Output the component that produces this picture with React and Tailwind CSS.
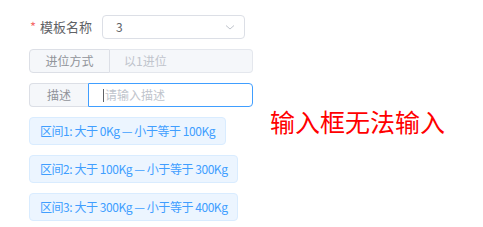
import React from "react";

export default function App() {
  const tags = [
    "区间1: 大于 0Kg — 小于等于 100Kg",
    "区间2: 大于 100Kg — 小于等于 300Kg",
    "区间3: 大于 300Kg — 小于等于 400Kg",
  ];
  return (
    <div className="w-[483px] h-[227px] bg-white flex pl-[29px] pt-[15px] font-['Noto_Sans_CJK_SC','Liberation_Sans',sans-serif]">
      <div className="w-[224px] flex flex-col">
        <div className="flex items-center h-6">
          <div className="w-[73px] flex items-center text-[13px] text-[#606266] pl-[1px]">
            <span className="text-[#f56c6c] mr-[4px] text-[13px]">*</span>
            <span>模板名称</span>
          </div>
          <div className="w-[143px] h-6 border border-[#dcdfe6] rounded-[4px] flex items-center justify-between pl-[13px] pr-[8px] text-[12px] text-[#606266]">
            <span>3</span>
            <svg width="12" height="12" viewBox="0 0 12 12" fill="none">
              <path d="M2 4.5 L6 8 L10 4.5" stroke="#c0c4cc" strokeWidth="1" />
            </svg>
          </div>
        </div>
        <div className="flex h-6 mt-[10px] text-[12px]">
          <div className="w-[81px] bg-[#f5f7fa] border border-[#dcdfe6] rounded-l-[4px] flex items-center justify-center text-[#909399]">
            进位方式
          </div>
          <div className="flex-1 bg-[#f5f7fa] border border-l-0 border-[#e4e7ed] rounded-r-[4px] flex items-center pl-[14px] text-[#c0c4cc]">
            以1进位
          </div>
        </div>
        <div className="flex h-6 mt-[10px] text-[12px]">
          <div className="w-[59px] bg-[#f5f7fa] border border-r-0 border-[#dcdfe6] rounded-l-[4px] flex items-center justify-center text-[#909399]">
            描述
          </div>
          <div className="flex-1 bg-white border border-[#409eff] rounded-r-[4px] flex items-center pl-[14px] text-[#c0c4cc]">
            <span className="w-px h-[13px] bg-[#606266] mr-[1px]"></span>
            请输入描述
          </div>
        </div>
        <div className="flex flex-col items-start gap-[10px] mt-[10px]">
          {tags.map((t) => (
            <div
              key={t}
              className="h-7 px-[10px] flex items-center bg-[#ecf5ff] border border-[#d9ecff] rounded-[4px] text-[12px] tracking-[-0.45px] text-[#409eff] whitespace-nowrap"
            >
              {t}
            </div>
          ))}
        </div>
      </div>
      <div className="ml-[17px] mt-[94px] text-[25px] leading-[25px] text-[#ff0000] whitespace-nowrap">
        输入框无法输入
      </div>
    </div>
  );
}
